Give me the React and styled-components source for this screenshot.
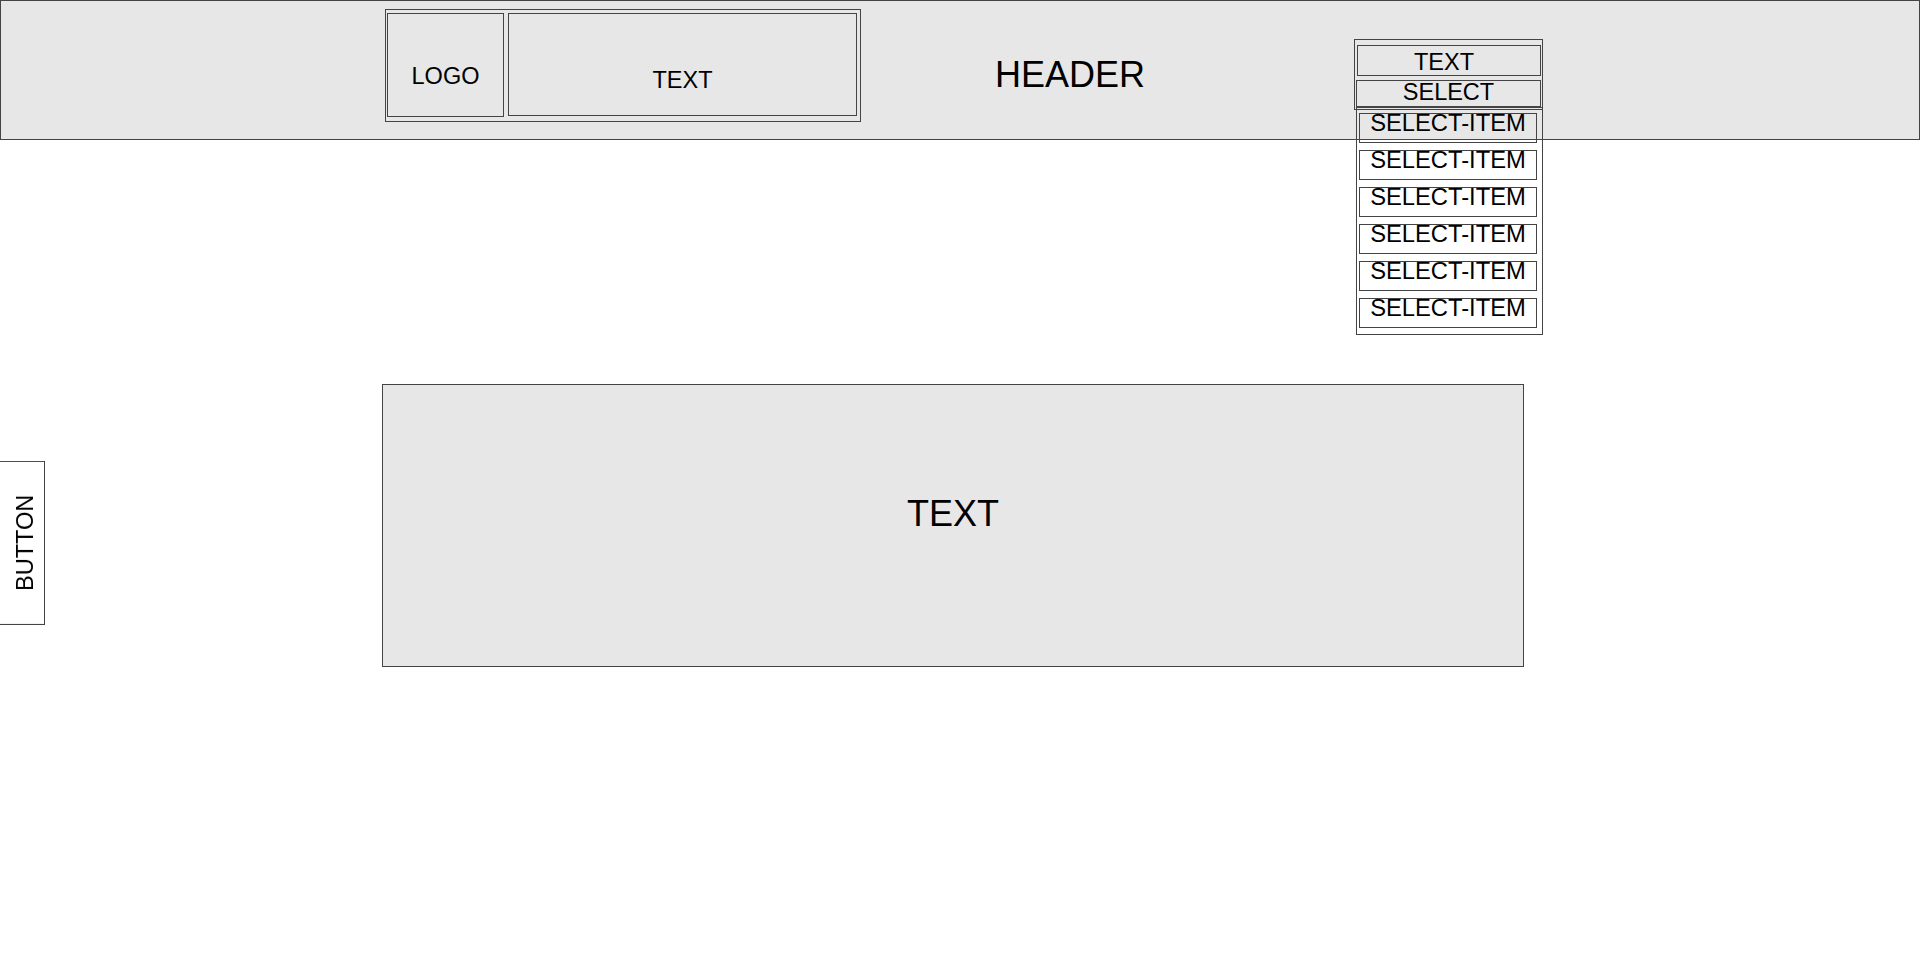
import React from 'react';
import styled, { createGlobalStyle } from 'styled-components';

const GlobalStyle = createGlobalStyle`
  html, body {
    margin: 0;
    padding: 0;
    background: #ffffff;
  }

  body {
    font-family: "Liberation Sans", Arial, sans-serif;
    color: #000000;
  }

  * {
    box-sizing: border-box;
  }
`;

const Page = styled.div`
  width: 1920px;
  min-height: 972px;
  position: relative;
`;

const Header = styled.header`
  height: 140px;
  background: #e7e7e7;
  border: 1px solid #444444;
  display: flex;
  align-items: flex-start;
  padding-left: 384px;
`;

const Brand = styled.div`
  margin-top: 8px;
  width: 476px;
  border: 1px solid #444444;
  padding: 3px 3px 4px 1px;
  display: flex;
  align-items: flex-start;
  gap: 4px;
`;

const Cell = styled.div`
  border: 1px solid #444444;
  display: flex;
  align-items: center;
  justify-content: center;
  font-size: 23.5px;
`;

const LogoBox = styled(Cell)`
  width: 117px;
  height: 104px;
  padding-top: 23px;
`;

const BrandText = styled(Cell)`
  width: 349px;
  height: 103px;
  padding-top: 31px;
`;

const Title = styled.h1`
  margin: 53px 0 0 0;
  width: 493px;
  padding-left: 134px;
  font-size: 36px;
  font-weight: 400;
  line-height: normal;
`;

const SelectWrap = styled.div`
  position: relative;
  margin-top: 38px;
  width: 189px;
  border: 1px solid #444444;
  padding: 5px 1px 2px 2px;
  display: flex;
  flex-direction: column;
  gap: 4px;
`;

const SelectLabel = styled(Cell)`
  height: 31px;
  padding-top: 3px;
  padding-right: 10px;
`;

const SelectField = styled(Cell)`
  height: 27px;
  margin-left: -1px;
  line-height: 1;
  padding-bottom: 1px;
`;

const SelectList = styled.ul`
  position: absolute;
  top: 67px;
  left: 1px;
  width: 187px;
  margin: 0;
  list-style: none;
  border: 1px solid #444444;
  padding: 5px 5px 6px 2px;
  display: flex;
  flex-direction: column;
  gap: 7px;
`;

const SelectItem = styled.li`
  height: 30px;
  border: 1px solid #444444;
  font-size: 23.75px;
  line-height: 18px;
  text-align: center;
  white-space: nowrap;
`;

const Banner = styled.section`
  margin: 244px 0 0 382px;
  width: 1142px;
  height: 283px;
  background: #e7e7e7;
  border: 1px solid #444444;
  display: flex;
  align-items: center;
  justify-content: center;
  padding-bottom: 23px;
  font-size: 36px;
`;

const SideButton = styled.button`
  position: fixed;
  left: -1px;
  top: 461px;
  width: 46px;
  height: 164px;
  margin: 0;
  padding: 0 7px 0 0;
  background: #ffffff;
  border: 1px solid #444444;
  font-family: "Liberation Sans", Arial, sans-serif;
  font-size: 23.5px;
  color: #000000;
  writing-mode: vertical-rl;
  transform: rotate(180deg);
  display: flex;
  align-items: center;
  justify-content: center;
  cursor: pointer;
`;

const items = Array.from({ length: 6 }, (_, i) => i);

const App = () => {
  return (
    <Page>
      <GlobalStyle />
      <Header>
        <Brand>
          <LogoBox>LOGO</LogoBox>
          <BrandText>TEXT</BrandText>
        </Brand>
        <Title>HEADER</Title>
        <SelectWrap>
          <SelectLabel>TEXT</SelectLabel>
          <SelectField>SELECT</SelectField>
          <SelectList>
            {items.map((i) => (
              <SelectItem key={i}>SELECT-ITEM</SelectItem>
            ))}
          </SelectList>
        </SelectWrap>
      </Header>
      <Banner>TEXT</Banner>
      <SideButton>BUTTON</SideButton>
    </Page>
  );
};

export default App;
